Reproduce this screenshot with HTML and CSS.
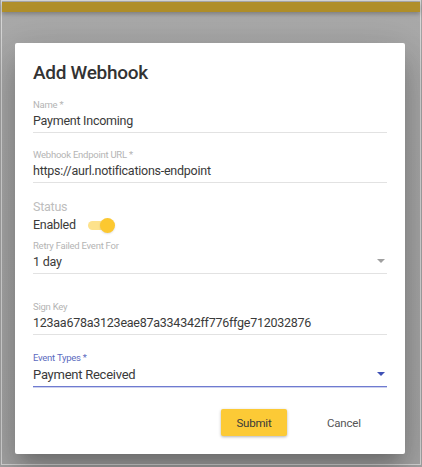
FILE: index.html
```html
<!DOCTYPE html>
<html>
<head>
<meta charset="utf-8">
<link rel="stylesheet" href="styles.css">
</head>
<body>
<div class="frame">
  <div class="topbar"></div>
  <div class="dialog">
    <h1 class="title">Add Webhook</h1>
    <div class="field field-name">
      <div class="label">Name *</div>
      <div class="value">Payment Incoming</div>
    </div>
    <div class="field field-url">
      <div class="label">Webhook Endpoint URL *</div>
      <div class="value">https://aurl.notifications-endpoint</div>
    </div>
    <div class="status">
      <div class="status-label">Status</div>
      <div class="toggle-row">
        <span class="toggle-text">Enabled</span>
        <span class="toggle"><span class="track"></span><span class="thumb"></span></span>
      </div>
    </div>
    <div class="field field-retry">
      <div class="label">Retry Failed Event For</div>
      <div class="value">1 day<span class="arrow"></span></div>
    </div>
    <div class="field field-key">
      <div class="label">Sign Key</div>
      <div class="value">123aa678a3123eae87a334342ff776ffge712032876</div>
    </div>
    <div class="field field-focused">
      <div class="label">Event Types *</div>
      <div class="value">Payment Received<span class="arrow"></span></div>
    </div>
    <div class="actions">
      <button class="btn btn-submit">Submit</button>
      <button class="btn btn-cancel">Cancel</button>
    </div>
  </div>
</div>
</body>
</html>
```

FILE: styles.css
```css
* { box-sizing: border-box; }
html, body { margin: 0; padding: 0; }
body {
  width: 422px;
  height: 467px;
  background: #a4a4a4;
  font-family: Roboto, "Liberation Sans", sans-serif;
  overflow: hidden;
}
.frame {
  margin-left: 1px;
  width: 420px;
  height: 465px;
  border: 1px solid #d6d6d6;
  background: linear-gradient(#aaaaaa, #a6a6a6);
  padding-top: 1px;
}
.topbar {
  height: 10px;
  background: #b08f2a;
  box-shadow: 0 2px 4px rgba(0,0,0,0.25);
}
.dialog {
  margin: 31px 0 0 13px;
  width: 390px;
  height: 411px;
  background: #fff;
  border-radius: 2px;
  padding: 18px 18px 0;
  box-shadow: 0 11px 15px -7px rgba(0,0,0,.2), 0 24px 38px 3px rgba(0,0,0,.14), 0 9px 46px 8px rgba(0,0,0,.12);
}
.title {
  margin: 0;
  font-family: Roboto, sans-serif;
  font-weight: 500;
  font-size: 19px;
  line-height: 24px;
  letter-spacing: -0.3px;
  color: #333;
}
.field {
  border-bottom: 1px solid #e2e2e2;
}
.label {
  font-size: 9.5px;
  line-height: 12px;
  letter-spacing: -0.25px;
  color: #b4b4b4;
}
.value {
  position: relative;
  font-size: 12.5px;
  line-height: 16px;
  letter-spacing: -0.25px;
  color: #3a3a3a;
  padding: 2px 0 3px;
}
.field-name { margin-top: 14px; }
.field-url { margin-top: 16px; }
.status { margin-top: 16px; }
.status-label {
  font-size: 12.5px;
  line-height: 16px;
  letter-spacing: -0.25px;
  color: #bdbdbd;
}
.toggle-row {
  display: flex;
  align-items: center;
  height: 20px;
}
.toggle-text {
  font-size: 12.5px;
  line-height: 16px;
  letter-spacing: -0.25px;
  color: #3a3a3a;
}
.toggle {
  position: relative;
  width: 27px;
  height: 15px;
  margin-left: 12px;
}
.track {
  position: absolute;
  left: 0;
  top: 3px;
  width: 24px;
  height: 9px;
  border-radius: 5px;
  background: #fde28c;
}
.thumb {
  position: absolute;
  right: 0;
  top: 0;
  width: 15px;
  height: 15px;
  border-radius: 50%;
  background: #fcc830;
  box-shadow: 0 1px 2px rgba(0,0,0,0.12);
}
.field-retry { margin-top: 5px; }
.field-key { margin-top: 27px; }
.field-focused {
  margin-top: 17px;
  border-bottom: 1px solid #6f7bd0;
  box-shadow: 0 1px 0 rgba(111,123,208,0.35);
}
.field-focused .label { color: #5c6bc0; }
.field-focused .value {
  font-size: 13px;
  padding: 3px 0 3px;
}
.arrow {
  position: absolute;
  right: 2px;
  top: 7px;
  width: 0;
  height: 0;
  border-left: 4px solid transparent;
  border-right: 4px solid transparent;
  border-top: 4px solid #a0a0a0;
}
.field-focused .arrow { border-top-color: #3f51b5; top: 8px; }
.actions {
  display: flex;
  align-items: center;
  margin-top: 22px;
  padding-left: 188px;
}
.btn {
  font-family: Roboto, sans-serif;
  font-size: 11.5px;
  letter-spacing: -0.2px;
  border: none;
  border-radius: 2px;
  height: 27px;
  padding: 0;
  cursor: pointer;
}
.btn-submit {
  width: 66px;
  background: #fcca36;
  color: #3a3a3a;
  box-shadow: 0 1px 3px rgba(0,0,0,0.3);
}
.btn-cancel {
  margin-left: 40px;
  background: transparent;
  color: #555;
}
```
